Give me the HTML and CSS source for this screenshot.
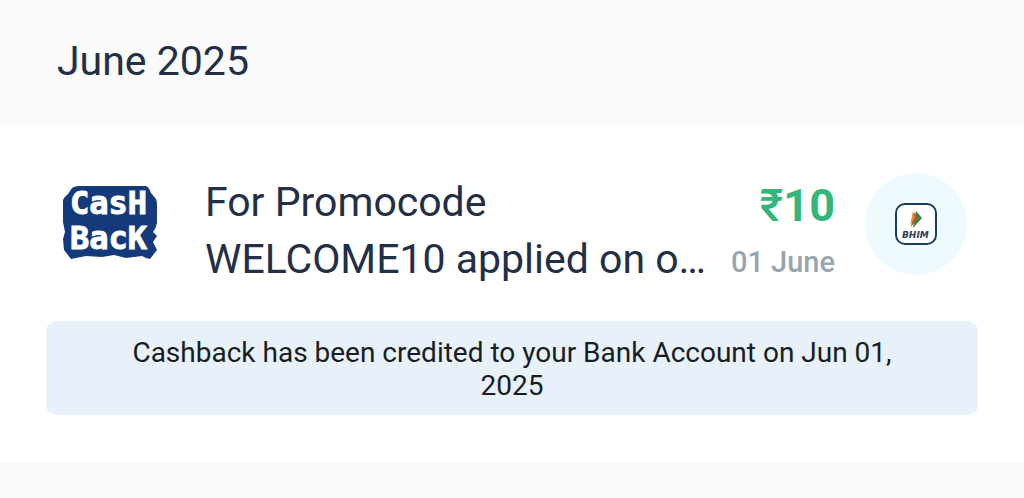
FILE: index.html
```html
<!DOCTYPE html>
<html lang="en">
<head>
    <meta charset="UTF-8">
    <meta name="viewport" content="width=device-width, initial-scale=1.0">
    <title>Cashback History</title>
    <link rel="stylesheet" href="styles.css">
</head>
<body>
    <main class="history">
        <h1 class="month">June 2025</h1>
        <section class="card">
            <div class="entry">
                <svg class="cashback-logo" viewBox="0 0 98 84" role="img" aria-label="Cashback">
                    <path class="logo-shape" d="M10 6 Q13 4 17 4 L84 4 Q87 5 89 11 L94 17 Q95 19 95 24 L95 41 Q94 46 91 50 L95 54 L91 60 L95 68 L88 77 L84 76 L80 74 L64 76 L52 73 L40 75 L24 74 L9 77 L2 68 L1 57 L3 50 L1 40 L1 18 Q2 15 6 12 Z"/>
                    <text class="logo-text" x="8" y="32">CasH</text>
                    <text class="logo-text" x="8" y="67">BacK</text>
                </svg>
                <h2 class="title">For Promocode<br>WELCOME10 applied on o…</h2>
                <div class="payment">
                    <span class="amount"><span class="currency">₹</span>10</span>
                    <span class="date">01 June</span>
                </div>
                <div class="bank">
                    <svg class="bhim-logo" viewBox="0 0 42 42" role="img" aria-label="BHIM">
                        <rect x="1" y="1" width="40" height="40" rx="9" fill="#fff" stroke="#173f5b" stroke-width="2"/>
                        <path d="M21 8 L27 15 L18 25 Z" fill="#3f8048"/>
                        <path d="M19 9 L23 15 L16 24 Z" fill="#a5622f"/>
                        <path d="M18 8 L20 14 L15 23 Z" fill="#ed8a35"/>
                        <text class="bhim-text" x="7" y="35">BHIM</text>
                    </svg>
                </div>
            </div>
            <p class="notice">Cashback has been credited to your Bank Account on Jun 01, 2025</p>
        </section>
    </main>
</body>
</html>
```
FILE: styles.css
```css
body {
    margin: 0;
    font-family: Roboto, sans-serif;
    background-color: #fafafa;
    color: #232f46;
}

.month {
    margin: 0;
    padding: 33px 57px 37px;
    font-size: 41px;
    font-weight: 400;
    line-height: 57px;
}

.card {
    padding: 46px 46px 47px;
    background-color: #ffffff;
}

.entry {
    display: flex;
    align-items: flex-start;
    padding: 0 11px 0 16px;
}

.cashback-logo {
    flex: none;
    width: 98px;
    margin: 9px 45px 0 0;
}

.logo-shape {
    fill: #153a7c;
}

.logo-text {
    font-family: "DejaVu Sans Mono", monospace;
    font-size: 32px;
    font-weight: 700;
    fill: #ffffff;
    stroke: #ffffff;
    stroke-width: 1px;
}

.title {
    flex: 1;
    margin: 0;
    padding-top: 1px;
    font-size: 41px;
    font-weight: 400;
    line-height: 57px;
    white-space: nowrap;
}

.payment {
    display: flex;
    flex-direction: column;
    align-items: flex-end;
    padding-top: 4px;
    margin-right: 30px;
}

.amount {
    font-size: 45px;
    font-weight: 700;
    line-height: 57px;
    color: #33b67c;
}

.currency {
    font-weight: 500;
}

.date {
    font-size: 29px;
    font-weight: 500;
    line-height: 57px;
    color: #98a5b0;
}

.bank {
    display: flex;
    flex: none;
    align-items: center;
    justify-content: center;
    width: 102px;
    height: 102px;
    border-radius: 50%;
    background-color: #effaff;
}

.bhim-logo {
    width: 42px;
}

.bhim-text {
    font-family: "DejaVu Sans", sans-serif;
    font-size: 9px;
    font-style: italic;
    font-weight: 700;
    fill: #273d58;
}

.notice {
    margin: 30px 0 0;
    padding: 15px 64px 13px;
    border-radius: 10px;
    background-color: #e8f1f9;
    color: #171d22;
    font-size: 28px;
    line-height: 33px;
    text-align: center;
}
```
